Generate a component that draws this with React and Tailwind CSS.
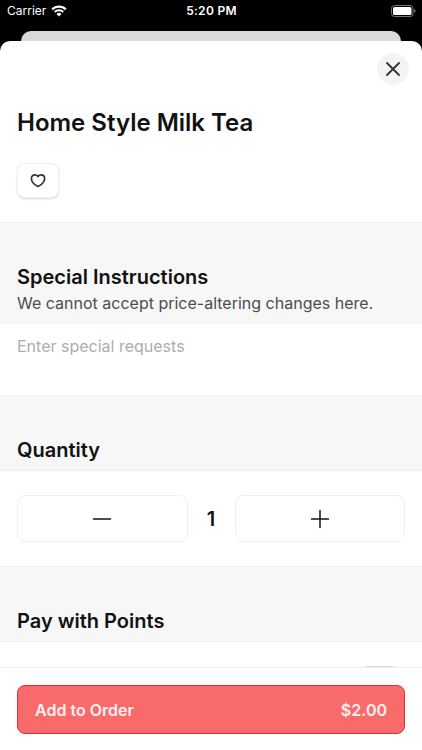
import { useState } from "react";

function WifiIcon() {
  return (
    <svg width="16" height="12" viewBox="0 0 16 12" fill="none" stroke="white" aria-hidden="true">
      <path d="M1.2 4.4a9.6 9.6 0 0 1 13.6 0" strokeWidth="2.3" />
      <path d="M3.7 7a6.1 6.1 0 0 1 8.6 0" strokeWidth="2" />
      <path d="M8 11.6 5.500 9.100a3.500 3.500 0 0 1 5 0z" fill="white" stroke="none" />
    </svg>
  );
}

function BatteryIcon() {
  return (
    <svg width="25" height="12" viewBox="0 0 25 12" fill="none" aria-hidden="true">
      <rect x="0.5" y="0.5" width="21.5" height="11" rx="3" stroke="#777" />
      <rect x="2" y="2" width="18.5" height="8" rx="1.6" fill="white" />
      <path d="M23.2 4v4c.8-.3 1.300-1.100 1.300-2s-.5-1.700-1.300-2z" fill="#777" />
    </svg>
  );
}

function StatusBar() {
  return (
    <header className="grid h-[22px] shrink-0 grid-cols-3 items-center pl-[7px] pr-[6px] text-white">
      <div className="flex items-center gap-[5px] text-[12px]">
        <span>Carrier</span>
        <WifiIcon />
      </div>
      <time className="text-center text-[12px] font-semibold tracking-wide">5:20 PM</time>
      <div className="flex justify-end">
        <BatteryIcon />
      </div>
    </header>
  );
}

function SectionHeader({ title, children }) {
  return (
    <div className="border-y border-[#f1f1f1] bg-[#f7f7f7] px-[17px] pt-10 pb-[6px]">
      <h2 className="text-[20px] leading-7 font-semibold">{title}</h2>
      {children}
    </div>
  );
}

function StepButton({ label, onClick, path }) {
  return (
    <button
      type="button"
      aria-label={label}
      onClick={onClick}
      className="flex h-[47px] flex-1 items-center justify-center rounded-lg border border-[#f1f1f1] bg-white"
    >
      <svg width="20" height="20" viewBox="0 0 20 20" fill="none" stroke="#121212" strokeWidth="1.5" strokeLinecap="round">
        <path d={path} />
      </svg>
    </button>
  );
}

export default function App() {
  const [quantity, setQuantity] = useState(1);
  const [favorite, setFavorite] = useState(false);

  return (
    <div className="flex h-screen flex-col overflow-hidden bg-black font-['Inter',sans-serif] text-[#121212]">
      <StatusBar />
      <div className="mx-[21px] mt-[9px] h-[10px] shrink-0 rounded-t-[10px] bg-[#d9d9d9]" />
      <main className="flex min-h-0 flex-1 flex-col overflow-hidden rounded-t-[10px] bg-white">
        <div className="min-h-0 flex-1 overflow-hidden">
          <div className="flex justify-end px-[13px] pt-3">
            <button type="button" aria-label="Close" className="flex size-8 items-center justify-center rounded-full bg-[#f4f4f4]">
              <svg width="14" height="14" viewBox="0 0 14 14" fill="none" stroke="#333" strokeWidth="1.8" strokeLinecap="round">
                <path d="M1 1l12 12M13 1L1 13" />
              </svg>
            </button>
          </div>
          <div className="px-[17px] pt-[22px] pb-6">
            <h1 className="text-[24px] leading-8 font-semibold">Home Style Milk Tea</h1>
            <button
              type="button"
              aria-label="Favorite"
              aria-pressed={favorite}
              onClick={() => setFavorite(!favorite)}
              className="mt-6 flex h-[35px] w-[42px] items-center justify-center rounded-lg border border-[#f1f1f1] bg-white shadow-[0_1px_2px_rgba(0,0,0,0.16)]"
            >
              <svg width="16" height="16" viewBox="0 0 16 16" fill={favorite ? "#333" : "none"} stroke="#333" strokeWidth="1.7" strokeLinejoin="round">
                <path d="M8 3.600C7 2.200 5.800 1.900 4.800 1.900 2.800 1.900 1.400 3.300 1.400 5.400c0 3.600 3.800 6.700 6.600 8.200 2.800-1.500 6.600-4.600 6.600-8.200 0-2.100-1.400-3.500-3.400-3.500-1 0-2.200.3-3.200 1.700z" />
              </svg>
            </button>
          </div>

          <SectionHeader title="Special Instructions">
            <p className="pb-[2px] text-[16px] leading-6 text-[#4d4d4d]">We cannot accept price-altering changes here.</p>
          </SectionHeader>
          <textarea
            aria-label="Special Instructions"
            placeholder="Enter special requests"
            className="block h-[71px] w-full resize-none bg-white px-[17px] pt-[10px] text-[16px] leading-6 outline-none placeholder:text-[#adadad]"
          />

          <SectionHeader title="Quantity" />
          <div className="flex items-center px-[17px] py-6">
            <StepButton label="Decrease quantity" onClick={() => setQuantity(Math.max(1, quantity - 1))} path="M1.500 10h17" />
            <output className="w-[47px] text-center text-[20px] leading-7 font-semibold">{quantity}</output>
            <StepButton label="Increase quantity" onClick={() => setQuantity(quantity + 1)} path="M1.500 10h17M10 1.500v17" />
          </div>

          <SectionHeader title="Pay with Points" />
          <div className="flex justify-end px-[17px] py-6">
            <input
              type="checkbox"
              role="switch"
              aria-label="Pay with Points"
              className="h-[31px] w-[51px] appearance-none rounded-full bg-[#d9d9d9]"
            />
          </div>
        </div>
        <footer className="shrink-0 border-t border-[#efefef] bg-white px-[17px] pt-[17px] pb-4">
          <button
            type="button"
            className="flex h-[49px] w-full items-center justify-between rounded-lg border border-[#dc2f38] bg-[#f96b6b] px-[17px] text-[16px] font-semibold text-[#fff0f0]"
          >
            <span>Add to Order</span>
            <span>$2.00</span>
          </button>
        </footer>
      </main>
    </div>
  );
}
